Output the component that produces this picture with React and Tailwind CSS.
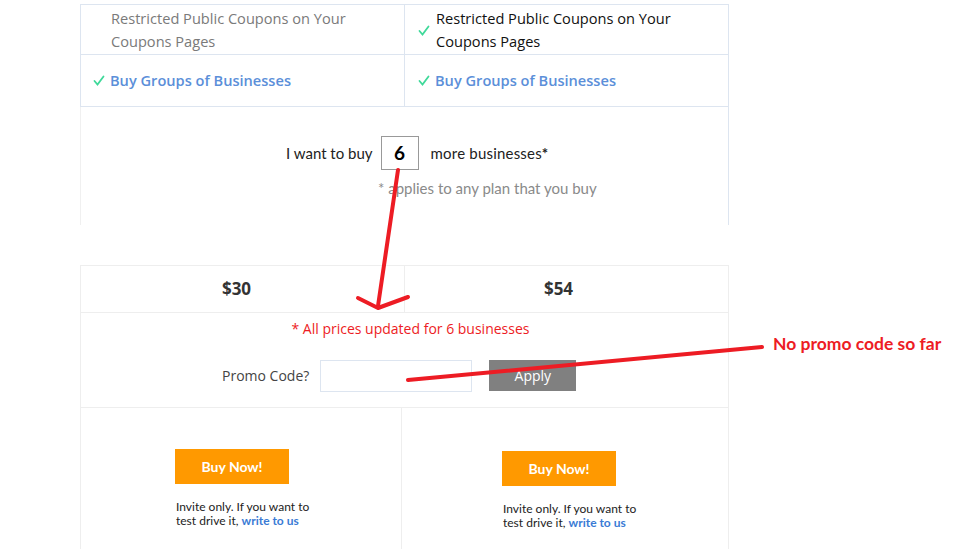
const Check = ({ className = "" }) => (
  <svg width="12" height="11" viewBox="0 0 12 11" className={className}>
    <path d="M1.5 6 L4.5 9.5 L10.5 1.5" fill="none" stroke="#3fd99a" strokeWidth="1.8" strokeLinecap="round" />
  </svg>
);

const openSans = { fontFamily: '"Open Sans", "Liberation Sans", sans-serif' };
const lato = { fontFamily: 'Lato, "Liberation Sans", sans-serif' };

const BuyColumn = ({ padLeft, padTop, border }) => (
  <div className={`h-full ${padLeft} ${padTop} ${border}`} style={lato}>
    <button className="w-[114px] h-[35px] bg-[#ff9900] text-white font-bold text-[14px]">
      Buy Now!
    </button>
    <div className="mt-[16px] ml-[1px] text-[12px] leading-[14px] text-[#222]">
      <div>Invite only. If you want to</div>
      <div>
        test drive it, <a className="text-[#3a7bd5] font-bold">write to us</a>
      </div>
    </div>
  </div>
);

export default function App() {
  return (
    <div className="relative w-[960px] h-[549px] overflow-hidden bg-white">
      <div className="ml-[80px] w-[649px] pt-[4px]">
        {/* feature rows */}
        <div className="border-l border-r border-[#dde5f0]" style={openSans}>
          <div className="grid grid-cols-[324px_1fr] h-[51px] border-t border-b border-[#dde5f0] text-[14.6px] leading-[23px]">
            <div className="flex items-center pl-[30px] pt-[1px] text-[#7a7a7a] border-r border-[#dde5f0]">
              <span>Restricted Public Coupons on Your<br />Coupons Pages</span>
            </div>
            <div className="flex items-center pl-[13px] pt-[1px] gap-[6px] text-[#111]">
              <Check />
              <span>Restricted Public Coupons on Your<br />Coupons Pages</span>
            </div>
          </div>
          <div className="grid grid-cols-[324px_1fr] h-[52px] border-b border-[#dde5f0] text-[14.6px] font-semibold text-[#5b8fd9]">
            <div className="flex items-center pl-[12px] gap-[5px] border-r border-[#dde5f0]">
              <Check />
              <span>Buy Groups of Businesses</span>
            </div>
            <div className="flex items-center pl-[13px] gap-[5px]">
              <Check />
              <span>Buy Groups of Businesses</span>
            </div>
          </div>
        </div>

        {/* quantity */}
        <div className="h-[118px] border-l border-[#f0f0f0] border-r border-r-[#dde5f0] pt-[29px]" style={lato}>
          <div className="flex items-center pl-[205px] text-[15px] text-[#222]">
            <span>I want to buy</span>
            <div className="ml-[8px] w-[38px] h-[34px] border border-[#999] flex items-center justify-center text-[19px] font-bold text-black">
              6
            </div>
            <span className="ml-[12px] tracking-[0.2px]">more businesses<b className="font-bold">*</b></span>
          </div>
          <p className="mt-[7px] pl-[297px] text-[15px] text-[#8a8a8a]">* applies to any plan that you buy</p>
        </div>

        <div className="h-[40px]" />

        {/* prices */}
        <div className="grid grid-cols-[324px_1fr] h-[48px] border border-[#eeeeee] text-[17px] font-bold text-[#333]" style={openSans}>
          <div className="flex items-center justify-center border-r border-[#eeeeee] pr-[12px]">$30</div>
          <div className="flex items-center justify-center pr-[16px]">$54</div>
        </div>
        <div className="h-[27px] border-l border-r border-[#eeeeee] flex items-center justify-center pl-[12px] pt-[4px] text-[14px] text-[#ed1c24]" style={openSans}>
          * All prices updated for 6 businesses
        </div>

        {/* promo */}
        <div className="h-[68px] border-l border-r border-[#eeeeee] border-b flex items-center pl-[141px] pt-[4px]" style={openSans}>
          <span className="text-[14px] text-[#444]">Promo Code?</span>
          <input className="ml-[11px] w-[152px] h-[32px] border border-[#dde5f0] outline-none" />
          <button className="ml-[17px] w-[87px] h-[31px] bg-[#808080] text-white text-[14px]">Apply</button>
        </div>

        {/* buy */}
        <div className="grid grid-cols-[321px_1fr] h-[141px] border-l border-r border-[#eeeeee]">
          <BuyColumn padLeft="pl-[94px]" padTop="pt-[41px]" border="border-r border-[#eeeeee]" />
          <BuyColumn padLeft="pl-[100px]" padTop="pt-[43px]" border="" />
        </div>
      </div>

      {/* annotations */}
      <svg className="absolute inset-0 pointer-events-none" width="960" height="549">
        <g stroke="#ed1c24" strokeWidth="4" strokeLinecap="round" fill="none">
          <line x1="398" y1="170" x2="378" y2="306" />
          <polyline points="358,298 378,308 408,297" strokeLinejoin="round" />
          <line x1="408" y1="380" x2="762" y2="347" />
        </g>
      </svg>
      <div className="absolute left-[773px] top-[331px] text-[17.5px] font-bold text-[#ed1c24]" style={lato}>
        No promo code so far
      </div>
    </div>
  );
}
